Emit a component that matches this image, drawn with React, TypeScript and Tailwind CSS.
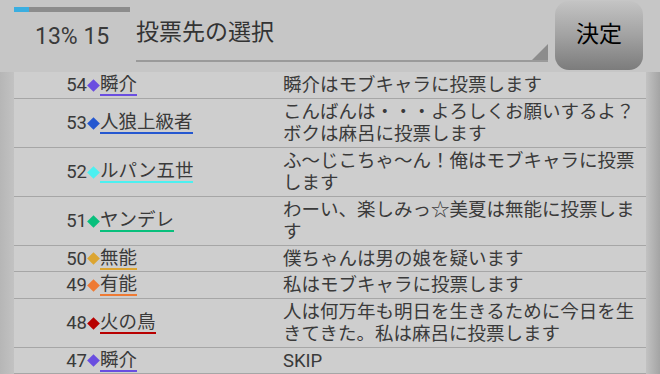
import React from 'react';

type Vote = {
  no: number;
  name: string;
  color: string;
  message: string;
};

const votes: Vote[] = [
  { no: 54, name: '瞬介', color: '#6a4ee0', message: '瞬介はモブキャラに投票します' },
  { no: 53, name: '人狼上級者', color: '#2457d0', message: 'こんばんは・・・よろしくお願いするよ？ボクは麻呂に投票します' },
  { no: 52, name: 'ルパン五世', color: '#4cf0f0', message: 'ふ〜じこちゃ〜ん！俺はモブキャラに投票します' },
  { no: 51, name: 'ヤンデレ', color: '#08bf7c', message: 'わーい、楽しみっ☆美夏は無能に投票します' },
  { no: 50, name: '無能', color: '#dca531', message: '僕ちゃんは男の娘を疑います' },
  { no: 49, name: '有能', color: '#ee7a34', message: '私はモブキャラに投票します' },
  { no: 48, name: '火の鳥', color: '#b80000', message: '人は何万年も明日を生きるために今日を生きてきた。私は麻呂に投票します' },
  { no: 47, name: '瞬介', color: '#6a4ee0', message: 'SKIP' },
];

const VoteRow: React.FC<{ vote: Vote }> = ({ vote }) => (
  <div className="flex border-b border-[#a6a6a6] pt-[2px] pb-[1px]">
    <div className="w-[269px] shrink-0 flex items-center pl-[52px]">
      <span className="w-[21px] text-right leading-[20px]">{vote.no}</span>
      <span
        className="w-[9px] h-[9px] rotate-45 mx-[2px]"
        style={{ backgroundColor: vote.color }}
      />
      <span
        className="border-b-2 leading-[20px]"
        style={{ borderColor: vote.color }}
      >
        {vote.name}
      </span>
    </div>
    <div className="w-[363px] leading-[22.5px] break-all">{vote.message}</div>
  </div>
);

const App: React.FC = () => {
  return (
    <div
      className="w-[660px] h-[374px] overflow-hidden bg-[#c6c6c6] text-[#3a3a3a] flex flex-col"
      style={{ fontFamily: 'Roboto, "Noto Sans CJK JP", sans-serif' }}
    >
      <div className="flex h-[72px] shrink-0">
        <div className="w-[136px] shrink-0">
          <div className="ml-[14px] mt-[7px] w-[116px] h-[5px] bg-[#8c8c8c]">
            <div className="w-[15px] h-full bg-[#3aaee0]" />
          </div>
          <div className="mt-[12px] pl-[35px] text-[23px] leading-[26px]">13% 15</div>
        </div>
        <div className="w-[412px] shrink-0 relative h-[62px] border-b-2 border-[#9a9a9a]">
          <div className="pt-[19px] text-[23px] leading-[28px] text-[#333]">投票先の選択</div>
          <div className="absolute right-0 bottom-0 w-0 h-0 border-l-[16px] border-l-transparent border-b-[16px] border-b-[#8c8c8c]" />
        </div>
        <button className="ml-[7px] mt-[1px] w-[88px] h-[69px] rounded-[14px] bg-gradient-to-b from-[#c4c4c4] via-[#a2a2a2] to-[#7c7c7c] text-[23px] text-black">
          決定
        </button>
      </div>
      <div className="flex flex-1 text-[18.5px]">
        <div className="w-[14px] shrink-0 bg-gradient-to-r from-[#b6b6b6] to-[#c2c2c2]" />
        <div className="w-[632px] shrink-0 bg-[#cecece]">
          {votes.map((v, i) => (
            <VoteRow key={i} vote={v} />
          ))}
        </div>
        <div className="w-[14px] shrink-0 bg-gradient-to-r from-[#c2c2c2] to-[#a4a4a4]" />
      </div>
    </div>
  );
};

export default App;
